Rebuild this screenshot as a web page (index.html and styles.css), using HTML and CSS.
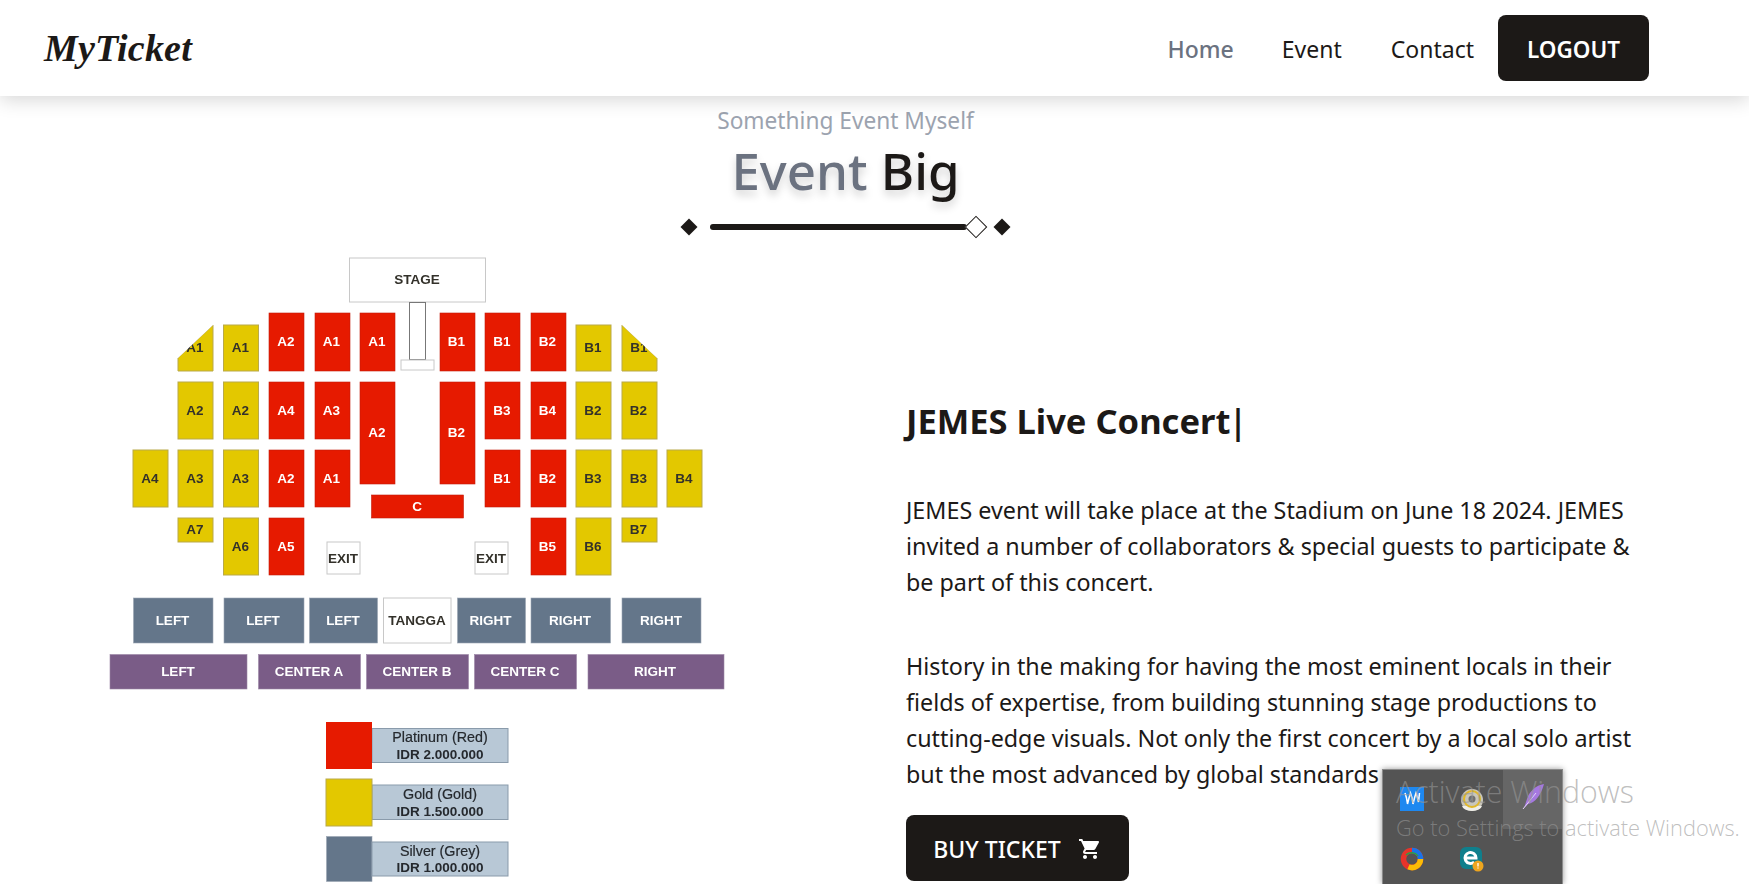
FILE: index.html
```html
<!DOCTYPE html>
<html lang="en">
<head>
<meta charset="utf-8">
<title>MyTicket</title>
<link rel="stylesheet" href="styles.css">
</head>
<body>
<header class="nav">
  <a class="logo">MyTicket</a>
  <nav class="menu">
    <a class="menu-link is-active">Home</a>
    <a class="menu-link">Event</a>
    <a class="menu-link">Contact</a>
    <a class="btn btn-logout">LOGOUT</a>
  </nav>
</header>
<main>
  <section class="intro">
    <p class="sub">Something Event Myself</p>
    <h1 class="title"><span class="title-muted">Event</span> Big</h1>
    <div class="divider">
      <i class="dia"></i>
      <span class="rule"><i class="dia-open"></i></span>
      <i class="dia"></i>
    </div>
  </section>
  <section class="content">
    <svg class="map" viewBox="100 250 640 634" width="640" height="634" role="img" aria-label="Seat map">
      <g class="white">
        <rect x="349.5" y="258" width="136" height="44"/>
        <rect x="409.5" y="302.5" width="16" height="57" class="dark-edge"/>
        <rect x="401" y="360" width="33" height="10"/>
        <rect x="327" y="542" width="33" height="32"/>
        <rect x="475" y="542" width="33" height="32"/>
        <rect x="383.5" y="598" width="67.5" height="45"/>
      </g>
      <g class="yellow">
        <polygon points="178,358 213,325 213,371 178,371"/>
        <rect x="223.5" y="325" width="35" height="46"/>
        <rect x="178" y="382" width="35" height="57"/>
        <rect x="223.5" y="382" width="35" height="57"/>
        <rect x="133" y="450" width="35" height="57"/>
        <rect x="178" y="450" width="35" height="57"/>
        <rect x="223.5" y="450" width="35" height="57"/>
        <rect x="178" y="518" width="35" height="24"/>
        <rect x="223.5" y="518" width="35" height="57"/>
        <rect x="576" y="325" width="35" height="46"/>
        <polygon points="622,325 657,358 657,371 622,371"/>
        <rect x="576" y="382" width="35" height="57"/>
        <rect x="622" y="382" width="35" height="57"/>
        <rect x="576" y="450" width="35" height="57"/>
        <rect x="622" y="450" width="35" height="57"/>
        <rect x="667" y="450" width="35" height="57"/>
        <rect x="622" y="518" width="35" height="24"/>
        <rect x="576" y="518" width="35" height="57"/>
      </g>
      <g class="red">
        <rect x="269" y="313" width="35" height="58"/>
        <rect x="315" y="313" width="35" height="58"/>
        <rect x="360" y="313" width="35" height="58"/>
        <rect x="269" y="382" width="35" height="57"/>
        <rect x="315" y="382" width="35" height="57"/>
        <rect x="360" y="382" width="35" height="102"/>
        <rect x="269" y="450" width="35" height="57"/>
        <rect x="315" y="450" width="35" height="57"/>
        <rect x="269" y="518" width="35" height="57"/>
        <rect x="371.5" y="495" width="92" height="23"/>
        <rect x="440" y="313" width="35" height="58"/>
        <rect x="485" y="313" width="35" height="58"/>
        <rect x="531" y="313" width="35" height="58"/>
        <rect x="440" y="382" width="35" height="102"/>
        <rect x="485" y="382" width="35" height="57"/>
        <rect x="531" y="382" width="35" height="57"/>
        <rect x="485" y="450" width="35" height="57"/>
        <rect x="531" y="450" width="35" height="57"/>
        <rect x="531" y="518" width="35" height="57"/>
      </g>
      <g class="slate">
        <rect x="133.5" y="598" width="79.5" height="45"/>
        <rect x="224" y="598" width="80" height="45"/>
        <rect x="309.5" y="598" width="68" height="45"/>
        <rect x="457.5" y="598" width="68" height="45"/>
        <rect x="531" y="598" width="79.5" height="45"/>
        <rect x="622" y="598" width="79" height="45"/>
        <rect x="326.5" y="836.5" width="45.5" height="45"/>
      </g>
      <g class="purple">
        <rect x="110" y="654.5" width="137" height="34.5"/>
        <rect x="258.5" y="654.5" width="102" height="34.5"/>
        <rect x="366.5" y="654.5" width="102" height="34.5"/>
        <rect x="474.5" y="654.5" width="102" height="34.5"/>
        <rect x="588" y="654.5" width="136" height="34.5"/>
      </g>
      <g class="legend">
        <rect x="372" y="728.5" width="136" height="34"/>
        <rect x="372" y="785" width="136" height="34.5"/>
        <rect x="372" y="842" width="136" height="34"/>
      </g>
      <rect x="326" y="722" width="46" height="47" class="swatch-red"/>
      <rect x="326" y="779" width="46" height="47" class="swatch-gold"/>

      <g class="lbl lbl-dark">
        <text x="417" y="279">STAGE</text>
        <text x="195" y="347">A1</text>
        <text x="240.500" y="347">A1</text>
        <text x="195" y="410">A2</text>
        <text x="240.500" y="410">A2</text>
        <text x="150" y="478">A4</text>
        <text x="195" y="478">A3</text>
        <text x="240.500" y="478">A3</text>
        <text x="195" y="529.5">A7</text>
        <text x="240.500" y="546">A6</text>
        <text x="593" y="347">B1</text>
        <text x="639" y="347">B1</text>
        <text x="593" y="410">B2</text>
        <text x="638.500" y="410">B2</text>
        <text x="593" y="478">B3</text>
        <text x="638.500" y="478">B3</text>
        <text x="684" y="478">B4</text>
        <text x="638.500" y="529.5">B7</text>
        <text x="593" y="546">B6</text>
        <text x="343" y="558">EXIT</text>
        <text x="491" y="558">EXIT</text>
        <text x="417" y="620">TANGGA</text>
      </g>
      <g class="lbl lbl-light">
        <text x="286" y="341">A2</text>
        <text x="331.500" y="341">A1</text>
        <text x="377" y="341">A1</text>
        <text x="286" y="410">A4</text>
        <text x="331.500" y="410">A3</text>
        <text x="377" y="432">A2</text>
        <text x="286" y="478">A2</text>
        <text x="331.500" y="478">A1</text>
        <text x="286" y="546">A5</text>
        <text x="417" y="506">C</text>
        <text x="456.5" y="341">B1</text>
        <text x="502" y="341">B1</text>
        <text x="547.500" y="341">B2</text>
        <text x="456.5" y="432">B2</text>
        <text x="502" y="410">B3</text>
        <text x="547.500" y="410">B4</text>
        <text x="502" y="478">B1</text>
        <text x="547.500" y="478">B2</text>
        <text x="547.500" y="546">B5</text>
        <text x="172.5" y="620">LEFT</text>
        <text x="263" y="620">LEFT</text>
        <text x="343" y="620">LEFT</text>
        <text x="490.5" y="620">RIGHT</text>
        <text x="570" y="620">RIGHT</text>
        <text x="661" y="620">RIGHT</text>
        <text x="178" y="671">LEFT</text>
        <text x="309" y="671">CENTER A</text>
        <text x="417" y="671">CENTER B</text>
        <text x="525" y="671">CENTER C</text>
        <text x="655" y="671">RIGHT</text>
      </g>
      <g class="lbl lbl-legend">
        <text x="440" y="737">Platinum (Red)</text>
        <text x="440" y="754">IDR 2.000.000</text>
        <text x="440" y="794">Gold (Gold)</text>
        <text x="440" y="811">IDR 1.500.000</text>
        <text x="440" y="850.5">Silver (Grey)</text>
        <text x="440" y="867.5">IDR 1.000.000</text>
      </g>
      <polygon points="178,325 213,325 178,358" class="notch"/>
      <polygon points="622,325 657,325 657,358" class="notch"/>
    </svg>
    <article class="details">
      <h2 class="event-name">JEMES Live Concert<span class="caret">|</span></h2>
      <p class="copy">JEMES event will take place at the Stadium on June 18 2024. JEMES invited a number of collaborators &amp; special guests to participate &amp; be part of this concert.</p>
      <p class="copy">History in the making for having the most eminent locals in their fields of expertise, from building stunning stage productions to cutting-edge visuals. Not only the first concert by a local solo artist but the most advanced by global standards</p>
      <a class="btn btn-buy">BUY TICKET
        <svg class="cart" viewBox="0 0 24 24" width="24" height="24"><path d="M7 18c-1.1 0-1.99.9-1.99 2S5.9 22 7 22s2-.9 2-2-.9-2-2-2zM1 2v2h2l3.6 7.59-1.35 2.45c-.16.28-.25.61-.25.96 0 1.1.9 2 2 2h12v-2H7.42c-.14 0-.25-.11-.25-.25l.03-.12.9-1.63h7.45c.75 0 1.41-.41 1.75-1.03l3.58-6.49c.08-.14.12-.31.12-.48 0-.55-.45-1-1-1H5.21l-.94-2H1zm16 16c-1.1 0-1.99.9-1.99 2s.89 2 1.99 2 2-.9 2-2-.9-2-2-2z"/></svg>
      </a>
    </article>
  </section>
</main>

<aside class="tray">
  <span class="tray-hover"></span>
  <svg class="tray-icons" viewBox="0 0 181 115" width="181" height="115">
    <rect x="18" y="18" width="24" height="24" fill="#1e88f0"/>
    <path d="M23 24l1.500 5 1 6 1.500-6 1.500-5 1.500 5 1 6 1.500-6 1.500-5 1.500 5 1 4 1-9" fill="none" stroke="#fff" stroke-width="1.500"/>
    <circle cx="90" cy="31" r="11" fill="#c9c6bb"/>
    <path d="M90 42a11 6 0 0 0 10-5l-20 0a11 6 0 0 0 10 5z" fill="#efeee8"/>
    <circle cx="90" cy="30" r="8" fill="none" stroke="#e0b72a" stroke-width="2"/>
    <circle cx="90" cy="30" r="3.5" fill="#6f6f6f"/>
    <path d="M162 15c-8 1-15 8-17 15l-3 9 4-4c7-1 13-9 16-20z" fill="#a678e0"/>
    <path d="M141 40l13-16" stroke="#e4d4f6" stroke-width="1"/>
    <circle cx="30" cy="90" r="8.500" fill="none" stroke="#e8332a" stroke-width="5.500"/>
    <path d="M30 81.500a8.500 8.500 0 0 1 8.500 8.500" fill="none" stroke="#1a73e8" stroke-width="5.500"/>
    <path d="M38.500 90a8.500 8.500 0 0 1-12 7.800" fill="none" stroke="#fbbc05" stroke-width="5.500"/>
    <path d="M24 86a8 8 0 0 1 12 1" fill="none" stroke="#2f9e44" stroke-width="1.500"/>
    <rect x="78" y="78" width="22" height="22" rx="6" fill="#0f7f8c"/>
    <path d="M84 89h10a5.500 5.500 0 1 0-1.800 4" fill="none" stroke="#fff" stroke-width="3"/>
    <circle cx="96" cy="97" r="5.500" fill="#eda51f"/>
    <path d="M96 94v3.500M96 98.500v1" stroke="#fff" stroke-width="1.300"/>
  </svg>
</aside>
<div class="activate">
  <p class="activate-title">Activate Windows</p>
  <p class="activate-sub">Go to Settings to activate Windows.</p>
</div>
</body>
</html>
```

FILE: styles.css
```css
* { box-sizing: border-box; }
html, body { margin: 0; height: 884px; overflow: hidden; background: #fff; }
body { font-family: "Noto Sans", "Open Sans", sans-serif; color: #1c1917; position: relative; }
a { color: inherit; text-decoration: none; }
p, h1, h2 { margin: 0; }

.nav {
  height: 96px; display: flex; align-items: center; justify-content: space-between;
  padding: 0 100px 0 44px; background: #fff;
  box-shadow: 0 4px 18px rgba(0, 0, 0, .16); position: relative;
}
.logo { font: italic 700 38px "Liberation Serif", serif; letter-spacing: .2px; }
.menu { display: flex; align-items: center; font-size: 23px; }
.menu-link { margin-right: 48px; padding-top: 2px; position: relative; left: -1px; }
.menu-link:nth-child(3) { margin-right: 24px; left: 0; }
.is-active { color: #6b7280; font-weight: 500; }
.btn { display: inline-flex; align-items: center; justify-content: center; background: #1c1917; color: #fff; border-radius: 8px; font-weight: 600; }
.btn-logout { width: 151px; height: 66px; margin-top: -1px; padding-top: 4px; font-size: 22.500px; }

.intro { display: flex; flex-direction: column; align-items: center; height: 154px; padding: 10px 58px 0 0; }
.sub { font-size: 22.700px; line-height: 30px; color: #9ca3af; }
.title { font-size: 51px; line-height: 68px; font-weight: 500; text-shadow: 0 5px 8px rgba(0, 0, 0, .18); }
.title-muted { color: #6b7280; }
.divider { display: flex; align-items: center; gap: 13px; margin-top: 17px; }
.dia { width: 12px; height: 12px; background: #1c1917; transform: rotate(45deg); margin: 0 2px; }
.rule { position: relative; display: block; width: 257px; height: 6px; margin-right: 14px; background: #1c1917; border-radius: 3px; }
.dia-open { position: absolute; right: -17px; top: -5px; width: 16px; height: 16px; background: #fff; border: 1px solid #1c1917; transform: rotate(45deg); }

.content { display: flex; align-items: flex-start; padding-left: 100px; }
.map { flex: none; margin-top: 0; filter: blur(.4px); }
.white rect { fill: #fff; stroke: #c8c8c8; stroke-width: 1; }
.white .dark-edge { stroke: #777; }
.yellow > * { fill: #e3c800; stroke: #b9a94a; stroke-width: 1; }
.red rect { fill: #e61a00; stroke: #c41c0a; stroke-width: .6; }
.slate rect { fill: #64768a; stroke: #9aa5b2; stroke-width: .6; }
.purple rect { fill: #7a5c87; stroke: #9c86a6; stroke-width: .6; }
.legend rect { fill: #b8c8d6; stroke: #8a9bab; stroke-width: 1; }
.swatch-red { fill: #e61a00; }
.swatch-gold { fill: #e3c800; stroke: #b9a94a; }
.notch { fill: #fff; }
.lbl text { font: 700 13.500px "Liberation Sans", Arial, sans-serif; text-anchor: middle; dominant-baseline: central; }
.lbl-dark text { fill: #33312a; }
.lbl-light text { fill: #fff; }
.lbl-legend text { fill: #25292e; font-size: 13.5px; }
.lbl-legend text:nth-child(odd) { font-weight: 400; font-size: 14.300px; stroke: #25292e; stroke-width: .2; }

.details { width: 734px; margin-left: 166px; padding-top: 146px; }
.event-name { font-size: 34.500px; line-height: 50px; font-weight: 700; margin-bottom: 46px; white-space: nowrap; }
.caret { font-weight: 600; margin-left: -2px; }
.copy { font-size: 23.300px; line-height: 36px; margin-bottom: 48px; }
.copy + .copy { margin-bottom: 23px; }
.btn-buy { width: 223px; height: 66px; padding-top: 2px; font-size: 23px; gap: 17px; font-weight: 500; }
.cart { fill: #fff; }

.tray { position: absolute; left: 1382px; top: 769px; width: 181px; height: 115px; background: #545454; box-shadow: 0 0 6px rgba(0, 0, 0, .4); border: 1px solid #8a8a8a; border-bottom: 0; }
.tray-hover { position: absolute; right: 0; top: 0; width: 59px; height: 59px; background: #666; }
.tray-icons { position: absolute; left: -1px; top: -1px; }
.activate { position: absolute; left: 1396px; top: 771px; color: rgba(150, 150, 150, .62); font-family: "Open Sans", sans-serif; font-weight: 300; white-space: nowrap; }
.activate-title { font-size: 30.300px; line-height: 42px; }
.activate-sub { font-size: 21.800px; line-height: 30px; }
```
